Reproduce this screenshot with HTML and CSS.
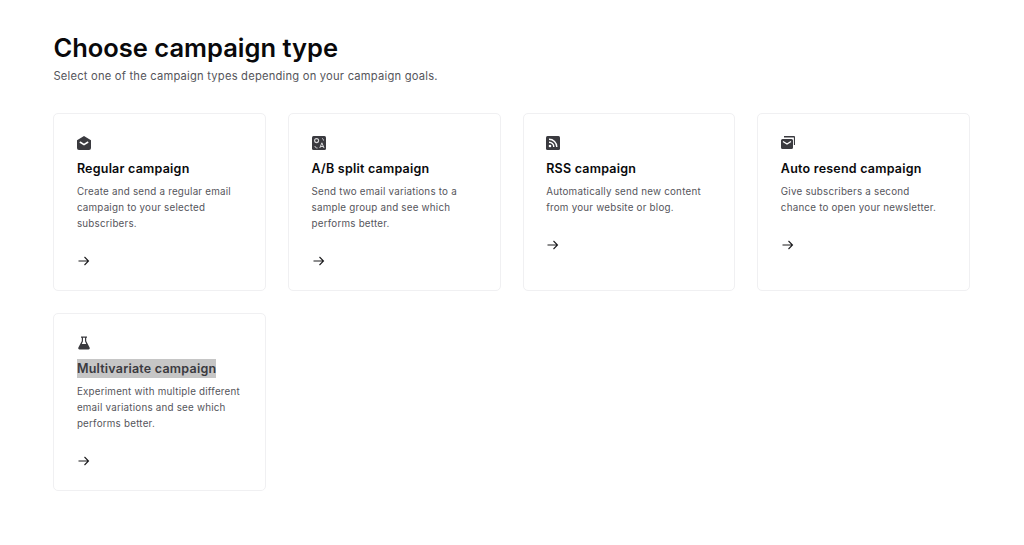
FILE: index.html
```html
<!DOCTYPE html>
<html lang="en">
<head>
<meta charset="utf-8">
<title>Choose campaign type</title>
<link rel="stylesheet" href="styles.css">
</head>
<body>
<main class="page">
  <h1 class="title">Choose campaign type</h1>
  <p class="subtitle">Select one of the campaign types depending on your campaign goals.</p>
  <div class="grid">
    <a class="card">
      <svg class="icon" viewBox="0 0 14 14"><path d="M7 0 14 4.200V12a2 2 0 0 1-2 2H2a2 2 0 0 1-2-2V4.200Z" fill="#3a3a3f"/><path d="M3.300 6.300 7 8.600l3.700-2.300" fill="none" stroke="#fff" stroke-width="1.600" stroke-linecap="round" stroke-linejoin="round"/></svg>
      <h2 class="name">Regular campaign</h2>
      <p class="desc">Create and send a regular email campaign to your selected subscribers.</p>
      <svg class="arrow" viewBox="0 0 12 12"><path d="M.5 6h10M6.500 2l4 4-4 4" fill="none" stroke="#1c1c1f" stroke-width="1.100"/></svg>
    </a>
    <a class="card">
      <svg class="icon" viewBox="0 0 14 14"><rect width="14" height="14" rx="1.500" fill="#3a3a3f"/><circle cx="4.600" cy="4.600" r="2" fill="none" stroke="#d8d8da" stroke-width="1.100"/><path d="M7.800 12 9.900 6.800 12 12M8.500 10.500h2.800M3 10c0 1.500 1 2 2.500 2M10 2.500c1 .2 1.500 1 1.500 2" fill="none" stroke="#d8d8da" stroke-width="1"/></svg>
      <h2 class="name">A/B split campaign</h2>
      <p class="desc">Send two email variations to a sample group and see which performs better.</p>
      <svg class="arrow" viewBox="0 0 12 12"><path d="M.5 6h10M6.500 2l4 4-4 4" fill="none" stroke="#1c1c1f" stroke-width="1.100"/></svg>
    </a>
    <a class="card">
      <svg class="icon" viewBox="0 0 14 14"><rect width="14" height="14" rx="1.500" fill="#3a3a3f"/><circle cx="4" cy="10" r="1.300" fill="#fff"/><path d="M3 6.200a4.800 4.800 0 0 1 4.800 4.800M3 3.200a7.800 7.800 0 0 1 7.800 7.800" fill="none" stroke="#fff" stroke-width="1.400"/></svg>
      <h2 class="name">RSS campaign</h2>
      <p class="desc">Automatically send new content from your website or blog.</p>
      <svg class="arrow" viewBox="0 0 12 12"><path d="M.5 6h10M6.500 2l4 4-4 4" fill="none" stroke="#1c1c1f" stroke-width="1.100"/></svg>
    </a>
    <a class="card">
      <svg class="icon" viewBox="0 0 14 14"><path d="M3 .8h10a.6.6 0 0 1 .6.6V9" fill="none" stroke="#3a3a3f" stroke-width="1.400"/><path d="M0 4.500A1.500 1.500 0 0 1 1.500 3h9A1.500 1.500 0 0 1 12 4.500V11.500A1.500 1.500 0 0 1 10.500 13h-9A1.500 1.500 0 0 1 0 11.500Z" fill="#3a3a3f"/><path d="M2 5.500 6 8l4-2.500" fill="none" stroke="#fff" stroke-width="1.400"/></svg>
      <h2 class="name">Auto resend campaign</h2>
      <p class="desc">Give subscribers a second chance to open your newsletter.</p>
      <svg class="arrow" viewBox="0 0 12 12"><path d="M.5 6h10M6.500 2l4 4-4 4" fill="none" stroke="#1c1c1f" stroke-width="1.100"/></svg>
    </a>
    <a class="card">
      <svg class="icon" viewBox="0 0 14 14"><path d="M4 .5h6v1.200h-.8V5l3.400 6.500a1.300 1.300 0 0 1-1.100 2H2.500a1.300 1.300 0 0 1-1.100-2L4.800 5V1.700H4ZM6 1.700V5.300L4.800 8h4.400L8 5.300V1.700Z" fill="#3a3a3f" fill-rule="evenodd"/></svg>
      <h2 class="name"><span class="selected">Multivariate campaign</span></h2>
      <p class="desc">Experiment with multiple different email variations and see which performs better.</p>
      <svg class="arrow" viewBox="0 0 12 12"><path d="M.5 6h10M6.500 2l4 4-4 4" fill="none" stroke="#1c1c1f" stroke-width="1.100"/></svg>
    </a>
  </div>
</main>
</body>
</html>
```
FILE: styles.css
```css
* { box-sizing: border-box; }
html, body { margin: 0; padding: 0; }
body {
  background: #fff;
  font-family: Inter, "Liberation Sans", sans-serif;
  color: #09090b;
}
.page { padding: 32px 54px 0 53.400px; }
.title {
  margin: 0;
  font-size: 25.500px;
  line-height: 32px;
  font-weight: 600;
}
.subtitle {
  margin: 4px 0 0;
  font-size: 11.200px;
  line-height: 16px;
  color: #55555b;
  letter-spacing: 0.21px;
}
.grid {
  display: grid;
  grid-template-columns: repeat(4, 1fr);
  grid-auto-rows: 178px;
  gap: 22px;
  margin-top: 29px;
}
.card {
  display: flex;
  flex-direction: column;
  align-items: flex-start;
  padding: 22px 22.500px 0;
  background: #fff;
  border: 1px solid #f0f0f2;
  border-radius: 5px;
}
.icon { width: 14px; height: 14px; display: block; flex: none; }
.name {
  margin: 9px 0 0;
  font-size: 12.500px;
  line-height: 19px;
  font-weight: 600;
  letter-spacing: 0.22px;
}
.selected { display: inline-block; background: #c6c6c6; color: #3a3a3f; }
.desc {
  margin: 6px 0 0;
  font-size: 9.800px;
  line-height: 16px;
  color: #55555b;
  letter-spacing: 0.22px;
}
.arrow { width: 12px; height: 12px; margin-top: 23px; margin-left: 1px; display: block; flex: none; }
```
